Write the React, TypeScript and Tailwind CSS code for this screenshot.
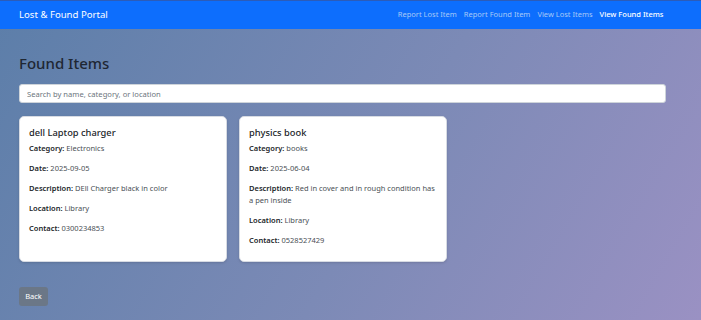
import React from 'react';

interface FoundItem {
  id: number;
  name: string;
  category: string;
  date: string;
  description: string;
  location: string;
  contact: string;
}

const items: FoundItem[] = [
  {
    id: 1,
    name: 'dell Laptop charger',
    category: 'Electronics',
    date: '2025-09-05',
    description: 'DEll Charger black in color',
    location: 'Library',
    contact: '0300234853',
  },
  {
    id: 2,
    name: 'physics book',
    category: 'books',
    date: '2025-06-04',
    description: 'Red in cover and in rough condition has a pen inside',
    location: 'Library',
    contact: '0528527429',
  },
];

const navLinks = ['Report Lost Item', 'Report Found Item', 'View Lost Items', 'View Found Items'];

const Field: React.FC<{ label: string; value: string }> = ({ label, value }) => (
  <p className="mb-[8px] text-[7.5px] leading-[12px] text-[#4a4f55]">
    <span className="font-semibold text-[#212529]">{label}:</span> {value}
  </p>
);

const ItemCard: React.FC<{ item: FoundItem }> = ({ item }) => (
  <div className="w-[208px] rounded-[5px] border border-[#d7dbe3] bg-white px-[9px] pt-[9px] pb-[7px] shadow-sm">
    <h5 className="mb-[3px] text-[9.3px] leading-[13px] font-medium text-[#212529]">{item.name}</h5>
    <Field label="Category" value={item.category} />
    <Field label="Date" value={item.date} />
    <Field label="Description" value={item.description} />
    <Field label="Location" value={item.location} />
    <Field label="Contact" value={item.contact} />
  </div>
);

export default function App() {
  return (
    <div
      className="flex h-[320px] w-full flex-col bg-[linear-gradient(120deg,#5c7ea9_0%,#7c8ab6_55%,#9a91c3_100%)]"
      style={{ fontFamily: '"Noto Sans", "Open Sans", sans-serif' }}
    >
      <nav className="flex h-[29px] items-center justify-between border-t border-[#2c5cb8] bg-[#0d6efd] pl-[19px] pr-[34px]">
        <span className="text-[9.6px] text-white">Lost &amp; Found Portal</span>
        <div className="flex">
          {navLinks.map((link, i) => (
            <a
              key={link}
              className={`px-[3.5px] text-[7.5px] ${
                i === navLinks.length - 1 ? 'font-medium text-white' : 'text-[#a9c9f7]'
              }`}
            >
              {link}
            </a>
          ))}
        </div>
      </nav>

      <main className="px-[19px] pt-[23px]">
        <h2 className="mb-[10px] text-[15px] leading-[22px] font-medium text-[#1f2733]">Found Items</h2>

        <input
          type="text"
          placeholder="Search by name, category, or location"
          className="mb-[13px] block h-[19px] w-[647px] rounded-[3px] border border-[#ced4da] bg-white px-[7px] text-[7.6px] text-[#212529] placeholder:text-[#6c757d] focus:outline-none"
        />

        <div className="flex gap-[12px]">
          {items.map(item => (
            <ItemCard key={item.id} item={item} />
          ))}
        </div>

        <button className="mt-[25px] block h-[19px] w-[29px] rounded-[3px] bg-[#6b7787] text-[7.5px] text-white">
          Back
        </button>
      </main>
    </div>
  );
}
